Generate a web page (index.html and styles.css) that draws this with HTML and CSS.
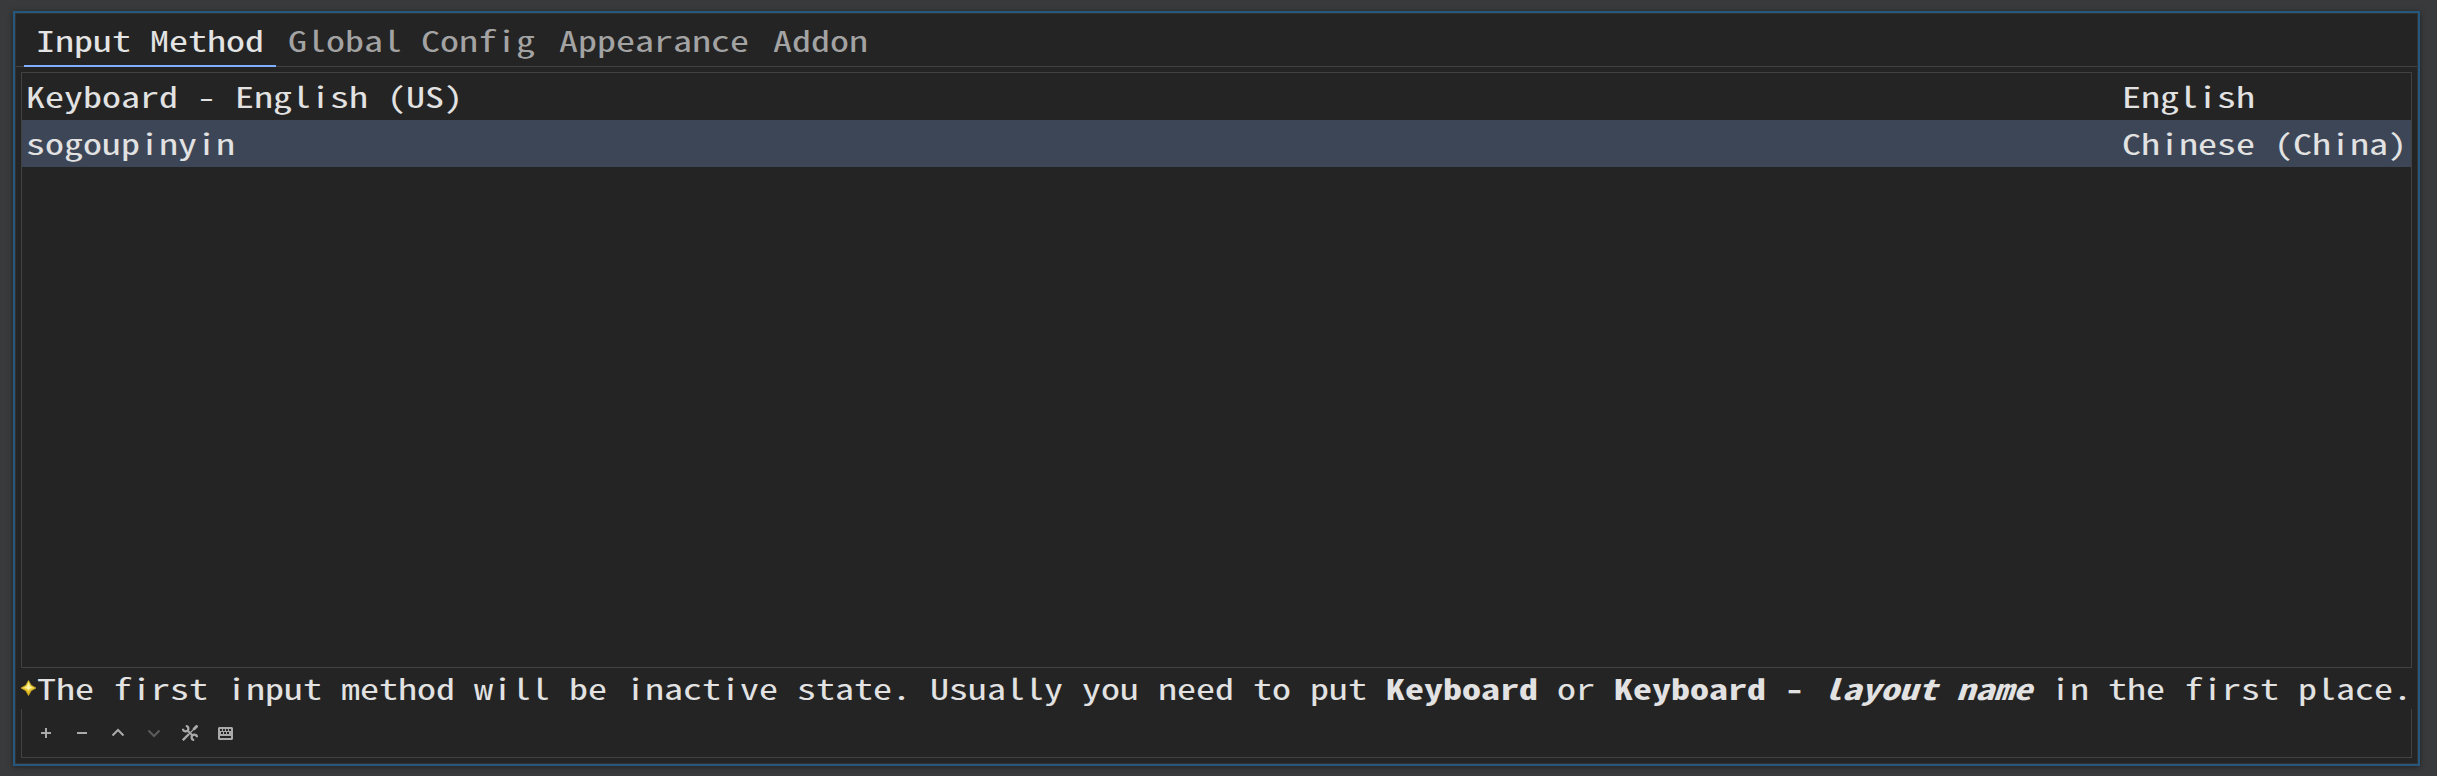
FILE: index.html
```html
<!DOCTYPE html>
<html lang="en">
<head>
<meta charset="utf-8">
<title>Input Method Configuration</title>
<link rel="stylesheet" href="styles.css">
</head>
<body>
<main class="window">
  <nav class="tabs">
    <div class="tab input-method active"><span class="text">Input Method</span></div>
    <div class="tab global-config"><span class="text">Global Config</span></div>
    <div class="tab appearance"><span class="text">Appearance</span></div>
    <div class="tab addon"><span class="text">Addon</span></div>
  </nav>
  <section class="list">
    <div class="row"><span class="text">Keyboard - English (US)</span><div class="lang"><span class="text">English</span></div></div>
    <div class="row selected"><span class="text">sogoupinyin</span><div class="lang"><span class="text">Chinese (China)</span></div></div>
  </section>
  <div class="hint">
    <svg class="star" viewBox="0 0 16 16"><defs><linearGradient id="gold" x1="0" y1="0" x2="0" y2="1"><stop offset="0" stop-color="#f8e85c"/><stop offset="1" stop-color="#dfb418"/></linearGradient></defs><path d="M7.500 .5 10.200 5.300 15 8 10.200 10.700 7.500 15.500 4.800 10.700 0 8 4.800 5.300Z" fill="url(#gold)" stroke="#c09e20" stroke-width=".8"/><path d="M7.500 3 9 6.500 12 8 9 8.500 7.500 10.500 6 8.500 3 8 6 6.500Z" fill="#fff5a8"/></svg>
    <span class="text">The first input method will be inactive state. Usually you need to put <b>Keyboard</b> or <b>Keyboard - <i>layout name</i></b> in the first place.</span>
  </div>
  <footer class="toolbar">
    <svg viewBox="0 0 16 16"><path d="M3 8h10M8 3v10" stroke-width="2"/></svg>
    <svg viewBox="0 0 16 16"><path d="M3 8h10" stroke-width="2"/></svg>
    <svg viewBox="0 0 16 16"><path d="M2.500 10.500 8 5l5.500 5.500" stroke-width="2"/></svg>
    <svg class="dim" viewBox="0 0 16 16"><path d="M2.500 5.500 8 11l5.500-5.500" stroke-width="2"/></svg>
    <svg viewBox="0 0 16 16"><path d="M.8 15.200 7 9" stroke-width="2.400"/><path d="M7 9 12 4" stroke-width="1.200"/><path d="M11.500 4.500 15.500.5" stroke-width="2.800"/><path d="M5 5 11 11" stroke-width="2"/><path d="M3.800 1A2.700 2.700 0 1 1 1 3.800M12.200 15A2.700 2.700 0 1 1 15 12.200" stroke-width="2.200"/></svg>
    <svg viewBox="0 0 16 16"><path class="solid" fill-rule="evenodd" d="M1 2h13l1 1v11l-1 1H1l-1-1V3zM2 4v2h2V4zm3 0v2h2V4zm3 0v2h2V4zm3 0v2h2V4zM3 7v2h2V7zm3 0v2h2V7zm3 0v2h2V7zM2 11v2h11v-2z"/></svg>
  </footer>
</main>
</body>
</html>
```
FILE: styles.css
```css
* { box-sizing: border-box; }

body {
  margin: 0;
  width: 2437px;
  height: 776px;
  padding: 11px 17px 10px 13px;
  background: #393a3c;
  color: #e2e2e2;
  font: 400 28.5px/45px "Noto Sans Mono CJK SC", "DejaVu Sans Mono", monospace;
  overflow: hidden;
}

.window {
  display: flex;
  flex-direction: column;
  height: 755px;
  border: 2px solid #25587f;
  background: #242424;
  box-shadow: inset 0 0 0 1px #34312f, 0 1px 5px #222;
}

/* Widens the half-width face to a 19px character cell. */
.text {
  display: block;
  width: max-content;
  white-space: pre;
  transform: scaleX(1.33333);
  transform-origin: 0 0;
}

.tabs {
  display: flex;
  height: 54px;
  margin: 0 1px;
  padding-left: 8px;
  border-bottom: 1px solid #424242;
}

.tab {
  height: 54px;
  padding: 4px 0 0 12px;
  color: #a3a3a3;
  font-weight: 500;
}

.tab.active {
  color: #e4e4e4;
  border-bottom: 2px solid #7fb0ff;
}

.input-method { width: 252px; }
.global-config { width: 271px; }
.appearance { width: 214px; }
.addon { width: 119px; }

.list {
  height: 596px;
  margin: 5px 6px 0;
  border: 1px solid #424242;
}

.row {
  display: flex;
  justify-content: space-between;
  height: 47px;
  padding: 0 4px;
}

.lang { width: 285px; }
.selected { background: #3d4657; }

.hint {
  display: flex;
  height: 41px;
  margin: 0 6px;
  line-height: 39px;
}

.star { width: 16px; height: 16px; margin-top: 12px; flex: none; }

.toolbar {
  display: flex;
  gap: 20px;
  height: 49px;
  margin: 0 6px;
  padding: 16px 0 0 16px;
  border: 1px solid #424242;
  border-top: 0;
  color: #aaa;
}

.toolbar svg {
  width: 16px;
  height: 16px;
  fill: none;
  stroke: currentColor;
}

.toolbar .solid { fill: currentColor; stroke: none; }
.toolbar .dim { color: #5c5c5c; }
```
